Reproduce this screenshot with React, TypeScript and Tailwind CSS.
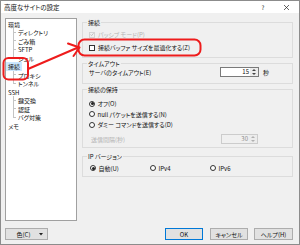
import React from "react";

type Item = { t: string; child?: boolean; last?: boolean; sel?: boolean };

const items: Item[] = [
  { t: "環境" },
  { t: "ディレクトリ", child: true },
  { t: "ごみ箱", child: true },
  { t: "SFTP", child: true },
  { t: "シェル", child: true, last: true },
  { t: "接続", sel: true },
  { t: "プロキシ", child: true },
  { t: "トンネル", child: true, last: true },
  { t: "SSH" },
  { t: "鍵交換", child: true },
  { t: "認証", child: true },
  { t: "バグ対策", child: true, last: true },
  { t: "メモ" },
];

function TreeRow({ it }: { it: Item }) {
  return (
    <div className="flex h-[8.5px] items-stretch">
      {it.child && (
        <>
          <div className="w-[7px]" />
          <div className="w-[3px] flex flex-col">
            <div className="h-1/2 border-l border-b border-[#c4c4c4]" />
            <div className={it.last ? "h-1/2" : "h-1/2 border-l border-[#c4c4c4]"} />
          </div>
        </>
      )}
      <span className={it.sel ? "px-[2px] flex items-center bg-[#cce8ff]" : "px-[2px] flex items-center"}>
        {it.t}
      </span>
    </div>
  );
}

function Radio({ on, label }: { on?: boolean; label: string }) {
  return (
    <div className="flex items-center h-[7px]">
      <span className="w-[6px] h-[6px] rounded-full border border-[#333] bg-white flex items-center justify-center shrink-0">
        {on && <span className="w-[3px] h-[3px] rounded-full bg-[#222]" />}
      </span>
      <span className="ml-[2.5px] whitespace-nowrap">{label}</span>
    </div>
  );
}

function Arrows({ color }: { color: string }) {
  return (
    <div className="w-[8px] flex flex-col">
      <div className="flex-1 flex items-center justify-center bg-[#ececec]">
        <svg width="4" height="2" viewBox="0 0 4 2">
          <polygon points="0,2 4,2 2,0" fill={color} />
        </svg>
      </div>
      <div className="flex-1 flex items-center justify-center bg-[#ececec]">
        <svg width="4" height="2" viewBox="0 0 4 2">
          <polygon points="0,0 4,0 2,2" fill={color} />
        </svg>
      </div>
    </div>
  );
}

export default function App() {
  return (
    <div className="relative w-[300px] h-[245px] overflow-hidden bg-[#f0f0f0] border border-[#8c8c8c] flex flex-col text-[6px] leading-[7px] text-[#111] font-['Noto_Sans_CJK_JP','Noto_Sans',sans-serif] [font-feature-settings:'palt']">
      {/* title bar */}
      <div className="h-[12px] shrink-0 bg-white flex items-center">
        <span className="pl-[3px] text-[6.5px] flex-1 whitespace-nowrap">高度なサイトの設定</span>
        <span className="w-[8px] text-center text-[6px]">?</span>
        <span className="w-[17px]" />
        <svg width="5" height="5" viewBox="0 0 5 5">
          <line x1="0" y1="0" x2="5" y2="5" stroke="#222" strokeWidth="0.7" />
          <line x1="5" y1="0" x2="0" y2="5" stroke="#222" strokeWidth="0.7" />
        </svg>
        <span className="w-[10px]" />
      </div>

      <div className="flex-1 flex flex-col pl-[4px] pr-[6px]">
        <div className="flex pt-[5px]">
          {/* tree */}
          <div className="w-[72px] h-[203px] bg-white border border-[#a0a0a0] pt-[0.75px] shrink-0">
            {items.map((it, i) => (
              <TreeRow key={i} it={it} />
            ))}
          </div>

          {/* right column */}
          <div className="ml-[5px] w-[211px] pt-[1px] flex flex-col">
            <fieldset className="border border-[#dcdcdc] pl-[4px] pb-[6px]">
              <legend className="px-[1px]">接続</legend>
              <div className="pl-[2px] pt-[5px] flex flex-col gap-[6px]">
                <div className="flex items-center h-[7px] text-[#b4b4b4]">
                  <span className="w-[6px] h-[6px] border border-[#d4d4d4] flex items-center justify-center shrink-0">
                    <svg width="5" height="5" viewBox="0 0 5 5">
                      <polyline points="0.6,2.6 1.9,3.9 4.4,1" fill="none" stroke="#b0b0b0" strokeWidth="0.9" />
                    </svg>
                  </span>
                  <span className="ml-[3px] whitespace-nowrap">パッシブ モード(P)</span>
                </div>
                <div className="flex items-center h-[7px]">
                  <span className="w-[6px] h-[6px] border border-[#333] bg-white shrink-0" />
                  <span className="ml-[3px] whitespace-nowrap">接続バッファ サイズを最適化する(Z)</span>
                </div>
              </div>
            </fieldset>

            <fieldset className="mt-[2px] border border-[#dcdcdc] pl-[4px] pb-[6px]">
              <legend className="px-[1px]">タイムアウト</legend>
              <div className="pl-[2px] flex items-center h-[10px]">
                <span className="whitespace-nowrap">サーバのタイムアウト(E)</span>
                <div className="ml-auto w-[39px] h-[10px] border border-[#7a7a7a] bg-white flex">
                  <span className="flex-1 text-right pr-[1px] leading-[8px]">15</span>
                  <Arrows color="#444" />
                </div>
                <span className="ml-[4px] mr-[23px]">秒</span>
              </div>
            </fieldset>

            <fieldset className="mt-[2px] border border-[#dcdcdc] pl-[4px] pb-[3px]">
              <legend className="px-[1px]">接続の保持</legend>
              <div className="pl-[2px] pt-[7px] flex flex-col gap-[3.5px]">
                <Radio on label="オフ(O)" />
                <Radio label="null パケットを送信する(N)" />
                <Radio label="ダミー コマンドを送信する(D)" />
              </div>
              <div className="pl-[2px] mt-[6px] flex items-center h-[10px] text-[#b4b4b4]">
                <span className="pl-[2px] whitespace-nowrap">送信間隔(秒)</span>
                <div className="ml-auto mr-[34px] w-[37px] h-[10px] border border-[#cccccc] bg-[#f0f0f0] flex">
                  <span className="flex-1 text-right pr-[1px] leading-[8px] text-[#8a8a8a]">30</span>
                  <Arrows color="#b0b0b0" />
                </div>
              </div>
            </fieldset>

            <fieldset className="mt-[5px] border border-[#dcdcdc] pl-[4px] pb-[4.5px]">
              <legend className="px-[1px]">IP バージョン</legend>
              <div className="pl-[3px] pt-[4.5px] flex">
                <div className="w-[60px]">
                  <Radio on label="自動(U)" />
                </div>
                <div className="w-[60px]">
                  <Radio label="IPv4" />
                </div>
                <div className="w-[60px]">
                  <Radio label="IPv6" />
                </div>
              </div>
            </fieldset>
          </div>
        </div>

        {/* buttons */}
        <div className="mt-[7px] h-[12px] flex items-center">
          <div className="w-[43px] h-[12px] bg-[#e1e1e1] border border-[#adadad] flex items-center">
            <span className="flex-1 text-center pl-[2px]">色(C)</span>
            <svg width="4" height="3" viewBox="0 0 4 3" className="mr-[4px]">
              <polygon points="0,0 4,0 2,2.5" fill="#222" />
            </svg>
          </div>
          <div className="flex-1" />
          <div className="w-[38px] h-[12px] bg-[#e1e1e1] border border-[#0078d7] flex items-center justify-center">OK</div>
          <div className="ml-[7px] w-[38px] h-[12px] bg-[#e1e1e1] border border-[#adadad] flex items-center justify-center">キャンセル</div>
          <div className="ml-[6px] w-[39px] h-[12px] bg-[#e1e1e1] border border-[#adadad] flex items-center justify-center">ヘルプ(H)</div>
        </div>
      </div>

      {/* red annotations */}
      <svg className="absolute left-0 top-0 pointer-events-none" width="300" height="245" viewBox="0 0 300 245">
        <rect x="2.5" y="57" width="24.5" height="21.5" rx="5" fill="none" stroke="#ee1c1c" strokeWidth="2" />
        <rect x="77.5" y="38.5" width="122" height="16" rx="6" fill="none" stroke="#ee1c1c" strokeWidth="2" />
        <line x1="27" y1="68" x2="77" y2="46.5" stroke="#ee1c1c" strokeWidth="2" strokeLinecap="round" />
        <polyline points="67,42.5 78.5,46.5 72.5,55" fill="none" stroke="#ee1c1c" strokeWidth="2" strokeLinecap="round" strokeLinejoin="round" />
      </svg>
    </div>
  );
}
